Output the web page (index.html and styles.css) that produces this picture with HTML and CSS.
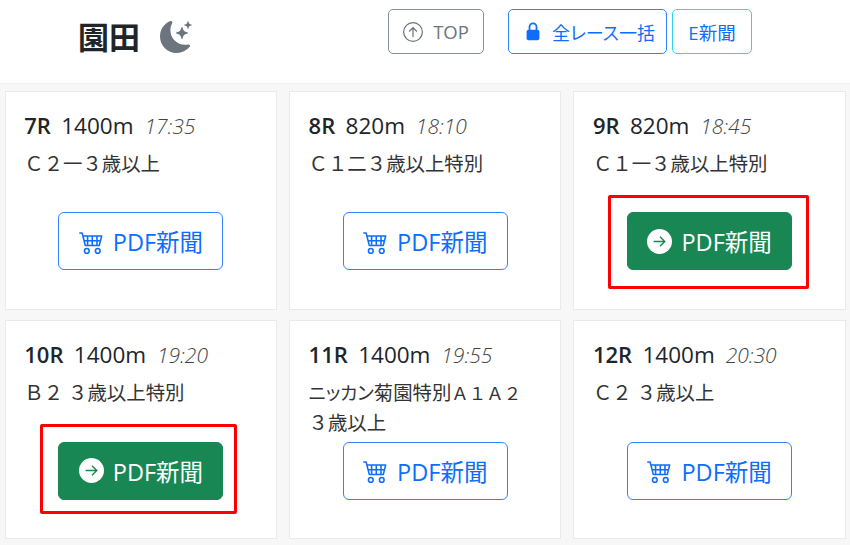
FILE: index.html
```html
<!DOCTYPE html>
<html lang="ja">
<head>
  <meta charset="UTF-8" />
  <meta name="viewport" content="width=device-width, initial-scale=1.0"/>
  <title>園田</title>
  <link rel="stylesheet" href="styles.css">
</head>
<body>
  <svg class="defs" width="0" height="0">
    <symbol id="cart" viewBox="0 0 16 16">
      <path fill="currentColor" d="M0 2.500A.5.5 0 0 1 .5 2H2a.5.5 0 0 1 .485.379L2.890 4H14.500a.5.5 0 0 1 .485.621l-1.500 6A.5.5 0 0 1 13 11H4a.5.5 0 0 1-.485-.379L1.610 3H.5a.5.5 0 0 1-.5-.5zM3.140 5l.5 2H5V5H3.140zM6 5v2h2V5H6zm3 0v2h2V5H9zm3 0v2h1.360l.5-2H12zm1.110 3H12v2h.610l.5-2zM11 8H9v2h2V8zM8 8H6v2h2V8zM5 8H3.890l.5 2H5V8zm0 5a1 1 0 1 0 0 2 1 1 0 0 0 0-2zm-2 1a2 2 0 1 1 4 0 2 2 0 0 1-4 0zm9-1a1 1 0 1 0 0 2 1 1 0 0 0 0-2zm-2 1a2 2 0 1 1 4 0 2 2 0 0 1-4 0z"/>
    </symbol>
    <symbol id="go" viewBox="0 0 16 16">
      <circle cx="8" cy="8" r="8" fill="#fff"/>
      <path d="M4.200 8h7.200M8.300 4.900 11.400 8l-3.100 3.100" fill="none" stroke="#198754" stroke-width="0.900"/>
    </symbol>
  </svg>

  <header class="top-bar">
    <div class="place">
      <h1>園田</h1>
      <svg class="moon" viewBox="0 0 16 16" fill="#6c757d">
        <path d="M6 .278a.768.768 0 0 1 .08.858 7.208 7.208 0 0 0-.878 3.460c0 4.021 3.278 7.277 7.318 7.277.527 0 1.040-.055 1.533-.16a.787.787 0 0 1 .81.316.733.733 0 0 1-.031.893A8.349 8.349 0 0 1 8.344 16C3.734 16 0 12.286 0 7.710 0 4.266 2.114 1.312 5.124.06A.752.752 0 0 1 6 .278z"/>
        <path d="M10.794 3.148a.217.217 0 0 1 .412 0l.387 1.162c.173.518.579.924 1.097 1.097l1.162.387a.217.217 0 0 1 0 .412l-1.162.387a1.734 1.734 0 0 0-1.097 1.097l-.387 1.162a.217.217 0 0 1-.412 0l-.387-1.162A1.734 1.734 0 0 0 9.310 6.593l-1.162-.387a.217.217 0 0 1 0-.412l1.162-.387a1.734 1.734 0 0 0 1.097-1.097l.387-1.162zM13.863.099a.145.145 0 0 1 .274 0l.258.774c.115.346.386.617.732.732l.774.258a.145.145 0 0 1 0 .274l-.774.258a1.156 1.156 0 0 0-.732.732l-.258.774a.145.145 0 0 1-.274 0l-.258-.774a1.156 1.156 0 0 0-.732-.732l-.774-.258a.145.145 0 0 1 0-.274l.774-.258c.346-.115.617-.386.732-.732L13.863.1z"/>
      </svg>
    </div>
    <a class="btn btn-gray top-btn">
      <svg class="up" viewBox="0 0 16 16"><circle cx="8" cy="8" r="7.500" fill="none" stroke="currentColor"/><path d="M8 12V4.700M4.900 7.600 8 4.500l3.100 3.100" fill="none" stroke="currentColor"/></svg>
      TOP
    </a>
    <a class="btn btn-blue all-btn">
      <svg class="lock" viewBox="0 0 12 16"><path d="M3 7V4a3 3 0 0 1 6 0v3" fill="none" stroke="#0d6efd" stroke-width="1.500"/><rect x="0.500" y="6.500" width="11" height="9" rx="1.800" fill="#0d6efd"/></svg>
      全レース一括
    </a>
    <a class="btn btn-cyan">E新聞</a>
  </header>

  <main class="races">
    <section class="card">
      <p class="head"><b>7R</b> 1400m <i>17:35</i></p>
      <p class="name">Ｃ２一３歳以上</p>
      <div class="action"><a class="pdf"><svg class="cart"><use href="#cart"/></svg>PDF新聞</a></div>
    </section>
    <section class="card">
      <p class="head"><b>8R</b> 820m <i>18:10</i></p>
      <p class="name">Ｃ１二３歳以上特別</p>
      <div class="action"><a class="pdf"><svg class="cart"><use href="#cart"/></svg>PDF新聞</a></div>
    </section>
    <section class="card">
      <p class="head"><b>9R</b> 820m <i>18:45</i></p>
      <p class="name">Ｃ１一３歳以上特別</p>
      <div class="action"><a class="pdf bought"><svg class="go"><use href="#go"/></svg>PDF新聞</a><span class="mark"></span></div>
    </section>
    <section class="card">
      <p class="head"><b>10R</b> 1400m <i>19:20</i></p>
      <p class="name">Ｂ２ ３歳以上特別</p>
      <div class="action"><a class="pdf bought"><svg class="go"><use href="#go"/></svg>PDF新聞</a><span class="mark mark-small"></span></div>
    </section>
    <section class="card">
      <p class="head"><b>11R</b> 1400m <i>19:55</i></p>
      <p class="name"><span class="kana">ニッカン</span>菊園特別<span class="grade">Ａ１Ａ２</span><br>３歳以上</p>
      <div class="action"><a class="pdf"><svg class="cart"><use href="#cart"/></svg>PDF新聞</a></div>
    </section>
    <section class="card">
      <p class="head"><b>12R</b> 1400m <i>20:30</i></p>
      <p class="name">Ｃ２ ３歳以上</p>
      <div class="action"><a class="pdf"><svg class="cart"><use href="#cart"/></svg>PDF新聞</a></div>
    </section>
  </main>
</body>
</html>
```

FILE: styles.css
```css
* {
  box-sizing: border-box;
}

body {
  font-family: 'Open Sans', 'Noto Sans CJK JP', sans-serif;
  background: #fff;
  color: #212529;
  margin: 0;
  height: 545px;
  overflow: hidden;
}

.defs {
  position: absolute;
}

.top-bar {
  display: flex;
  align-items: flex-start;
  height: 83px;
  padding-top: 9px;
}

.place {
  display: flex;
  align-items: center;
  gap: 20px;
  width: 388px;
  padding: 9px 0 0 78px;
}

h1 {
  margin: 0;
  font-size: 31px;
  line-height: 38px;
  font-weight: 700;
}

.moon {
  width: 32px;
  height: 32px;
  margin-top: -1px;
}

.btn {
  display: flex;
  align-items: center;
  justify-content: center;
  height: 45px;
  border: 1px solid;
  border-radius: 5px;
  font-size: 18.500px;
}

.btn-gray {
  color: #6c757d;
  border-color: #868e96;
}

.btn-blue {
  color: #0d6efd;
  border-color: #2f83fd;
}

.btn-cyan {
  color: #0d6efd;
  border-color: #33d2f2;
  width: 80px;
  margin-left: 5px;
}

.top-btn {
  width: 96px;
  margin-right: 24px;
  gap: 10px;
}

.all-btn {
  width: 159px;
  gap: 12px;
  padding-left: 6px;
  font-size: 18px;
  font-feature-settings: 'palt';
}

.up {
  width: 20px;
  height: 20px;
}

.lock {
  width: 14px;
  height: 19px;
}

.races {
  display: grid;
  grid-template-columns: repeat(3, 272.350px);
  grid-auto-rows: 219.400px;
  gap: 10px 12px;
  padding: 6.700px 4.750px 0;
  height: 462px;
  background: #f7f7f7;
  border-top: 1px solid #f1f1f1;
}

.card {
  background: #fff;
  border: 1px solid #eaeaea;
  padding: 19px 18.500px 0;
}

.head {
  margin: 0;
  height: 29px;
  font-size: 22.500px;
  line-height: 29px;
}

.head b {
  font-size: 22px;
  font-weight: 600;
  margin-right: 4.500px;
}

.head i {
  font-size: 21px;
  font-weight: 300;
  color: #444;
  margin-left: 5px;
}

.name {
  margin: 9px 0 0;
  height: 57px;
  font-size: 19.400px;
  line-height: 29px;
  color: #333;
}

.kana {
  font-size: 18.500px;
  font-feature-settings: 'palt';
}

.grade {
  font-size: 17.500px;
}

.action {
  position: relative;
  display: flex;
  justify-content: center;
  margin-top: 6.500px;
}

.pdf {
  display: flex;
  align-items: center;
  justify-content: center;
  gap: 9px;
  width: 165px;
  height: 58px;
  border: 1px solid #2f83fd;
  border-radius: 6px;
  color: #0d6efd;
  font-size: 23.500px;
}

.bought {
  background: #198754;
  border-color: #198754;
  color: #fff;
}

.cart {
  width: 25px;
  height: 25px;
}

.go {
  width: 25px;
  height: 25px;
}

.mark {
  position: absolute;
  left: 15.500px;
  top: -17.500px;
  width: 201px;
  height: 94px;
  border: 3px solid #f00;
  border-radius: 2px;
}

.mark-small {
  width: 197px;
  height: 90px;
}
```
